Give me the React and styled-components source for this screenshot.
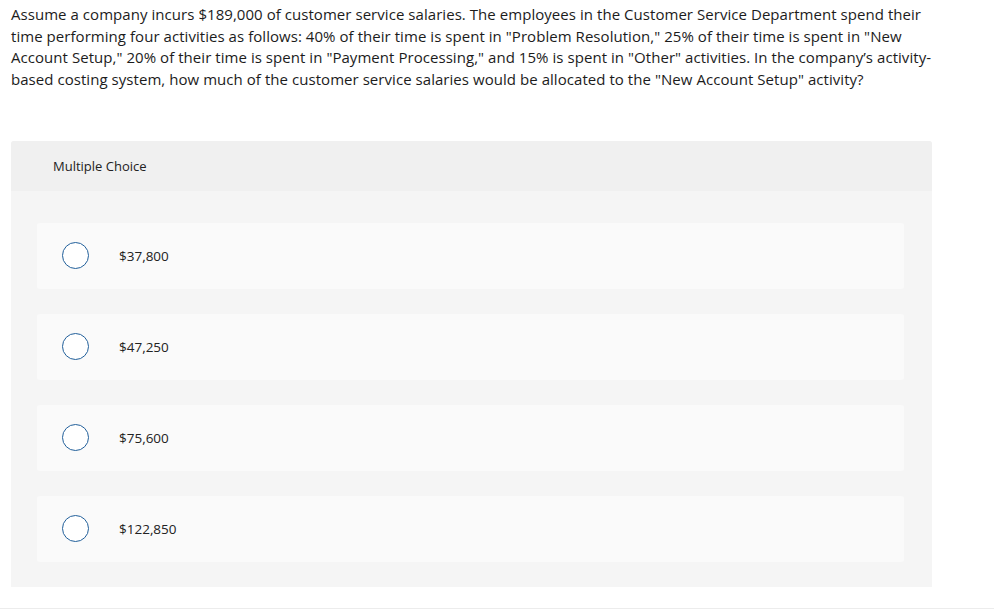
import React from "react";
import styled, { createGlobalStyle } from "styled-components";

const GlobalStyle = createGlobalStyle`
    html, body {
        margin: 0;
        padding: 0;
        background: #fff;
    }
    body {
        font-family: "Open Sans", "Liberation Sans", Arial, sans-serif;
        color: #1a1a1a;
    }
`

const SPage = styled.div`
    width: 994px;
    box-sizing: border-box;
    padding: 4px 0 0 11px;
    border-bottom: 1px solid #ececec;
    height: 609px;
`

const SQuestion = styled.p`
    width: 921px;
    margin: 0;
    font-size: 15px;
    line-height: 21.7px;
    letter-spacing: 0.05px;
    color: #1c1c1c;
`

const SPanel = styled.div`
    width: 921px;
    margin-top: 50px;
    background: #f5f5f5;
    border-radius: 3px 3px 0 0;
    overflow: hidden;
`

const SHeader = styled.div`
    height: 50px;
    display: flex;
    align-items: center;
    padding-left: 42px;
    background: #f0f0f0;
    font-size: 13px;
    color: #222;
`

const SOptions = styled.div`
    display: flex;
    flex-direction: column;
    gap: 25px;
    padding: 32px 28px 25px 26px;
`

const SOption = styled.label`
    height: 66px;
    display: flex;
    align-items: center;
    background: #fafafa;
    border-radius: 3px;
    padding-left: 25px;
    cursor: pointer;
`

const SRadio = styled.span`
    width: 25px;
    height: 25px;
    border: 1.6px solid #215f9a;
    border-radius: 50%;
    background: #fff;
    flex-shrink: 0;
`

const SAnswer = styled.span`
    margin-left: 30px;
    font-size: 13.5px;
    color: #222;
`

const answers = ["$37,800", "$47,250", "$75,600", "$122,850"]

export default function App() {
    return (
        <SPage>
            <GlobalStyle />
            <SQuestion>
                Assume a company incurs $189,000 of customer service salaries. The employees in the Customer Service Department spend their time performing four activities as follows: 40% of their time is spent in "Problem Resolution," 25% of their time is spent in "New Account Setup," 20% of their time is spent in "Payment Processing," and 15% is spent in "Other" activities. In the company’s activity-based costing system, how much of the customer service salaries would be allocated to the "New Account Setup" activity?
            </SQuestion>
            <SPanel>
                <SHeader>Multiple Choice</SHeader>
                <SOptions>
                    {answers.map((a) => (
                        <SOption key={a}>
                            <SRadio />
                            <SAnswer>{a}</SAnswer>
                        </SOption>
                    ))}
                </SOptions>
            </SPanel>
        </SPage>
    )
}
